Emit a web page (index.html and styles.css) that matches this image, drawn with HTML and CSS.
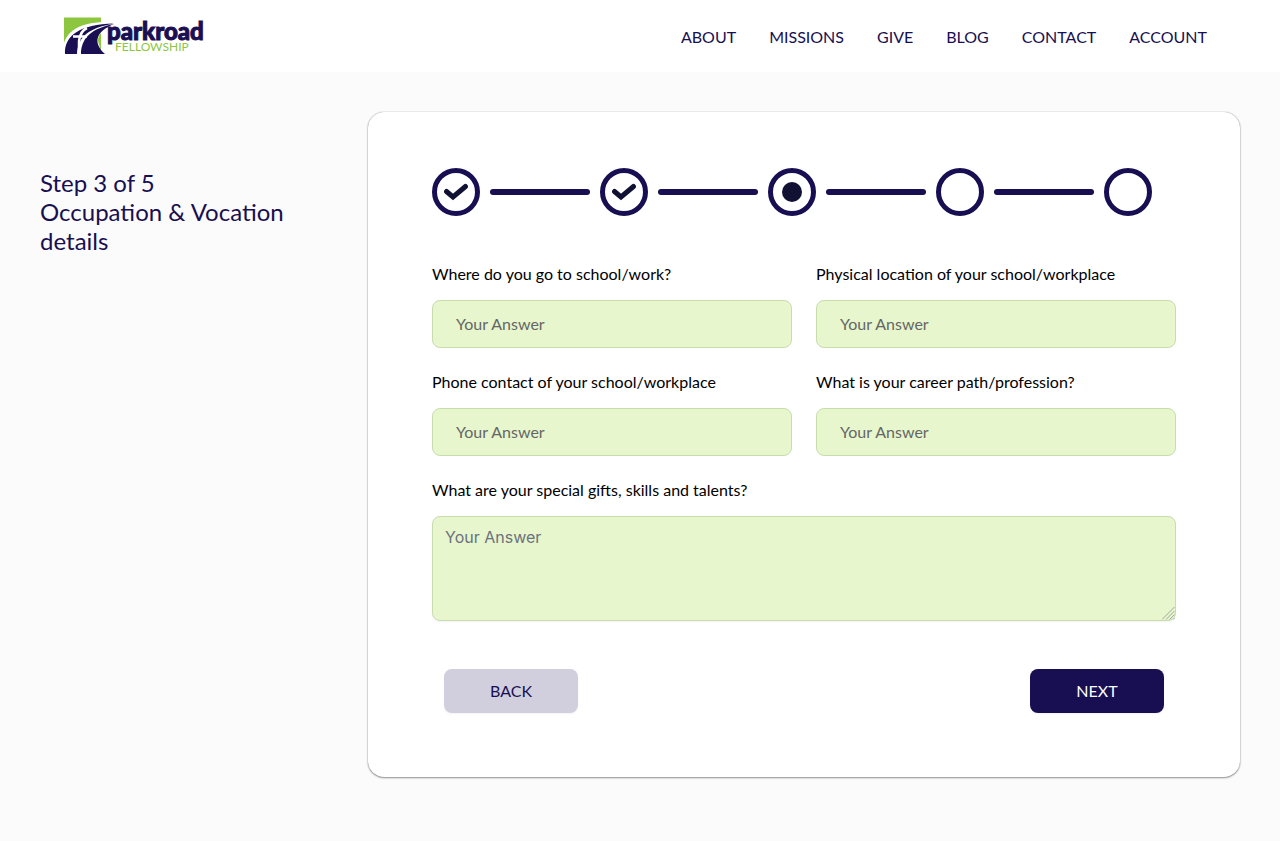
FILE: index.html
```html
<!DOCTYPE html>
<html lang="en">
<head>
<meta charset="utf-8">
<meta name="viewport" content="width=device-width, initial-scale=1">
<title>Parkroad Fellowship</title>
<link rel="stylesheet" href="styles.css">
</head>
<body>
<header class="header">
  <a class="logo" href="#" aria-label="Parkroad Fellowship">
    <svg class="logo-svg" width="142" height="40" viewBox="0 0 142 40">
      <path fill="#8dc63f" d="M0 1.500h37V36H0z"/>
      <path fill="#fff" d="M0 27C5 12 20 5 50 6C37 13 33 21 37 36V39H0z"/>
      <path fill="#1a0f52" d="M1 38C0 20 16 8 50 7.500C24 12 14 21 13 38z"/>
      <path fill="#1a0f52" d="M17 38C17 22 28 12 50 8C31 16 29 27 41 38z"/>
      <path fill="#8dc63f" d="M37 17V32C33 27 33 21 37 17z"/>
      <path fill="none" stroke="#fff" stroke-width="2.500" d="M23 12C18 14 16 18 15 25V38M9 20.500H23"/>
      <text class="logo-name" x="43" y="24">parkroad</text>
      <text class="logo-sub" x="51" y="35">FELLOWSHIP</text>
    </svg>
  </a>
  <nav class="nav">
    <a href="#">ABOUT</a>
    <a href="#">MISSIONS</a>
    <a href="#">GIVE</a>
    <a href="#">BLOG</a>
    <a href="#">CONTACT</a>
    <a href="#">ACCOUNT</a>
  </nav>
</header>
<main class="main">
  <h1 class="title">Step 3 of 5<br>Occupation &amp; Vocation details</h1>
  <form class="card">
    <div class="stepper">
      <span class="step"><svg width="24" height="18" viewBox="0 0 24 18"><path class="check" d="M2.500 8.500L9 14L21.500 3.500"/></svg></span>
      <span class="bar"></span>
      <span class="step"><svg width="24" height="18" viewBox="0 0 24 18"><path class="check" d="M2.500 8.500L9 14L21.500 3.500"/></svg></span>
      <span class="bar"></span>
      <span class="step"><span class="dot"></span></span>
      <span class="bar"></span>
      <span class="step"></span>
      <span class="bar"></span>
      <span class="step"></span>
    </div>
    <div class="fields">
      <div class="field">
        <label for="place">Where do you go to school/work?</label>
        <input class="input" id="place" type="text" placeholder="Your Answer">
      </div>
      <div class="field">
        <label for="location">Physical location of your school/workplace</label>
        <input class="input" id="location" type="text" placeholder="Your Answer">
      </div>
      <div class="field">
        <label for="phone">Phone contact of your school/workplace</label>
        <input class="input" id="phone" type="tel" placeholder="Your Answer">
      </div>
      <div class="field">
        <label for="career">What is your career path/profession?</label>
        <input class="input" id="career" type="text" placeholder="Your Answer">
      </div>
      <div class="field wide">
        <label for="gifts">What are your special gifts, skills and talents?</label>
        <div class="area-wrap">
          <textarea class="area" id="gifts" placeholder="Your Answer"></textarea>
          <svg class="grip" width="13" height="13" viewBox="0 0 13 13"><path d="M0 12.500L12.500 0M4 12.500L12.500 4M7.500 12.500L12.500 7.500M11 12.500L12.500 11"/></svg>
        </div>
      </div>
    </div>
    <div class="actions">
      <button class="button back" type="button">BACK</button>
      <button class="button next" type="button">NEXT</button>
    </div>
  </form>
</main>
</body>
</html>
```
FILE: styles.css
```css
* { box-sizing: border-box; }
body {
  margin: 0;
  min-height: 100vh;
  background: #fbfbfb;
  color: #000;
  font-family: Lato, "Liberation Sans", sans-serif;
  font-size: 16px;
  line-height: 20px;
}
.header {
  display: flex;
  align-items: center;
  justify-content: space-between;
  min-height: 72px;
  padding: 0 73px 0 64px;
  background: #fff;
}
.logo, .logo-svg { display: block; }
.logo-svg { overflow: visible; }
.logo-name {
  font: 900 24px Lato, sans-serif;
  fill: #1a0f52;
  stroke: #1a0f52;
  stroke-width: 1px;
}
.logo-sub { font: 400 12px Lato, sans-serif; fill: #8dc63f; }
.nav { display: flex; flex-wrap: wrap; gap: 33px; padding-top: 2px; }
.nav a { color: #180f52; text-decoration: none; }
.main {
  display: grid;
  grid-template-columns: 304px minmax(0, 1fr);
  gap: 24px;
  align-items: start;
  padding: 40px;
}
.title {
  margin: 0;
  padding-top: 56px;
  color: #180f52;
  font-size: 24px;
  font-weight: 400;
  line-height: 29px;
}
.card {
  padding: 56px 64px 64px;
  border-radius: 16px;
  background: #fff;
  box-shadow: 0 0 1px rgba(0, 0, 0, .5), 0 1px 2px rgba(0, 0, 0, .4);
}
.stepper {
  display: flex;
  align-items: center;
  gap: 10px;
  padding-right: 24px;
  margin-bottom: 48px;
}
.step {
  display: flex;
  align-items: center;
  justify-content: center;
  flex: none;
  width: 48px;
  height: 48px;
  border: 5px solid #180f52;
  border-radius: 50%;
}
.bar { flex: 1; height: 6px; border-radius: 3px; background: #180f52; }
.dot { width: 20px; height: 20px; border-radius: 50%; background: #111133; }
.check {
  fill: none;
  stroke: #111133;
  stroke-width: 5;
  stroke-linecap: round;
}
.fields { display: grid; grid-template-columns: 1fr 1fr; gap: 24px; }
.field { display: flex; flex-direction: column; gap: 16px; min-width: 0; }
.wide { grid-column: 1 / -1; }
.input, .area {
  width: 100%;
  border: 1px solid #c9dcae;
  border-radius: 8px;
  background: #e7f6cc;
  color: #000;
}
.input { height: 48px; padding: 0 23px 2px; font: 16px Lato, sans-serif; }
.input::placeholder { color: #666; opacity: 1; }
.area-wrap { position: relative; }
.area {
  display: block;
  height: 105px;
  padding: 8px 12px;
  font: 16px/24px Inter, sans-serif;
  box-shadow: 0 1px 2px rgba(0, 0, 0, .05);
  resize: vertical;
}
.area::placeholder { color: #6b7280; opacity: 1; }
.area::-webkit-resizer { background: transparent; }
.grip {
  position: absolute;
  right: 1px;
  bottom: 1px;
  fill: none;
  stroke: #a3a8a0;
  stroke-width: 1;
  pointer-events: none;
}
.actions {
  display: flex;
  justify-content: space-between;
  margin-top: 48px;
  padding: 0 12px;
}
.button {
  width: 134px;
  height: 44px;
  padding: 0 0 2px;
  border: 0;
  border-radius: 8px;
  font: 16px Lato, sans-serif;
  box-shadow: 0 1px 2px rgba(0, 0, 0, .05);
}
.back { background: #d1cfde; color: #180f52; }
.next { background: #180f52; color: #fff; }
@media (max-width: 900px) {
  .main { grid-template-columns: minmax(0, 1fr); }
  .fields { grid-template-columns: minmax(0, 1fr); }
}
```
